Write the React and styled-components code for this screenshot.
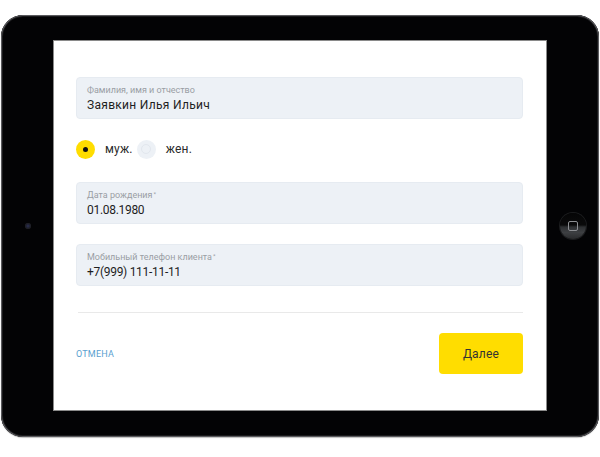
import React from "react";
import styled, { createGlobalStyle } from "styled-components";

const GlobalStyle = createGlobalStyle`
  html, body {
    margin: 0;
    padding: 0;
    background: #ffffff;
  }
  body {
    font-family: Roboto, "Noto Sans", sans-serif;
  }
`;

const Page = styled.div`
  width: 600px;
  height: 457px;
  padding-top: 15px;
  padding-left: 1px;
  box-sizing: border-box;
`;

const Device = styled.div`
  width: 598px;
  height: 422px;
  box-sizing: border-box;
  border-radius: 22px;
  background: #030305;
  box-shadow: inset 0 0 0 1px #5a5a5e, inset 0 0 0 2px #1a1a1c, 0 1px 1px rgba(0, 0, 0, 0.25);
  display: flex;
  align-items: stretch;
  padding: 26px 0 27px;
`;

const Bezel = styled.div`
  width: 53px;
  flex: none;
  display: flex;
  align-items: center;
  justify-content: center;
`;

const Camera = styled.div`
  width: 6px;
  height: 6px;
  border-radius: 50%;
  background: radial-gradient(circle at 50% 50%, #2a2f55 0%, #1c1d26 55%, #3a3a3e 100%);
`;

const HomeButton = styled.div`
  width: 26px;
  height: 26px;
  border-radius: 50%;
  margin-left: 1px;
  background: linear-gradient(180deg, #050506 0%, #0a0a0b 46%, #2e3033 54%, #3d3f42 75%, #2a2b2d 100%);
  box-shadow: 0 0 0 1px #1b1c1e;
  display: flex;
  align-items: center;
  justify-content: center;
`;

const HomeSquare = styled.div`
  width: 8px;
  height: 8px;
  border: 1px solid #8c8e92;
  border-radius: 2px;
`;

const Screen = styled.div`
  width: 492px;
  flex: none;
  background: #ffffff;
  box-shadow: 0 0 0 1px #8a8a8a;
  box-sizing: border-box;
  padding: 36px 23px 0 22px;
  display: flex;
  flex-direction: column;
`;

const Field = styled.div`
  height: 42px;
  box-sizing: border-box;
  background: #edf1f6;
  border: 1px solid #e6ebf1;
  border-radius: 4px;
  padding: 7px 10px 0;
  margin-top: ${({ $gap }) => $gap || 0}px;
`;

const Label = styled.div`
  font-size: 9px;
  line-height: 11px;
  color: #9a9ea4;

  sup {
    font-size: 6px;
    vertical-align: top;
    line-height: 8px;
    margin-left: 1px;
  }
`;

const Value = styled.div`
  font-size: 12px;
  line-height: 15px;
  color: #1e1e1e;
  margin-top: 2px;
  letter-spacing: ${({ $numeric }) => ($numeric ? "-0.3px" : "0.3px")};
`;

const RadioRow = styled.div`
  display: flex;
  align-items: center;
  height: 20px;
  margin-top: 20px;
`;

const Radio = styled.div`
  width: 19px;
  height: 19px;
  border-radius: 50%;
  background: ${({ $checked }) => ($checked ? "#ffdd00" : "#edf1f6")};
  display: flex;
  align-items: center;
  justify-content: center;

  &::after {
    content: "";
    width: ${({ $checked }) => ($checked ? "5px" : "8px")};
    height: ${({ $checked }) => ($checked ? "5px" : "8px")};
    border-radius: 50%;
    background: ${({ $checked }) => ($checked ? "#111" : "transparent")};
    border: ${({ $checked }) => ($checked ? "none" : "1px solid #e2e7ee")};
  }
`;

const RadioText = styled.span`
  font-size: 12px;
  color: #2a2a2a;
  margin-left: 10px;
  margin-right: 4px;
  letter-spacing: 0.2px;
`;

const Divider = styled.div`
  height: 1px;
  background: #e9e9e9;
  margin: 26px 0 0 2px;
`;

const Footer = styled.div`
  display: flex;
  align-items: center;
  justify-content: space-between;
  margin-top: 20px;
`;

const CancelLink = styled.a`
  font-size: 9px;
  color: #5a9fd0;
  text-transform: uppercase;
  letter-spacing: 0.2px;
  text-decoration: none;
`;

const NextButton = styled.button`
  width: 84px;
  height: 41px;
  border: none;
  border-radius: 4px;
  background: #ffdd00;
  color: #333;
  font-family: inherit;
  font-size: 12px;
  letter-spacing: 0.2px;
`;

export default function App() {
  return (
    <Page>
      <GlobalStyle />
      <Device>
        <Bezel>
          <Camera />
        </Bezel>
        <Screen>
          <Field>
            <Label>Фамилия, имя и отчество</Label>
            <Value>Заявкин Илья Ильич</Value>
          </Field>
          <RadioRow>
            <Radio $checked />
            <RadioText>муж.</RadioText>
            <Radio />
            <RadioText>жен.</RadioText>
          </RadioRow>
          <Field $gap={23}>
            <Label>
              Дата рождения<sup>*</sup>
            </Label>
            <Value $numeric>01.08.1980</Value>
          </Field>
          <Field $gap={20}>
            <Label>
              Мобильный телефон клиента<sup>*</sup>
            </Label>
            <Value $numeric>+7(999) 111-11-11</Value>
          </Field>
          <Divider />
          <Footer>
            <CancelLink>Отмена</CancelLink>
            <NextButton>Далее</NextButton>
          </Footer>
        </Screen>
        <Bezel>
          <HomeButton>
            <HomeSquare />
          </HomeButton>
        </Bezel>
      </Device>
    </Page>
  );
}
